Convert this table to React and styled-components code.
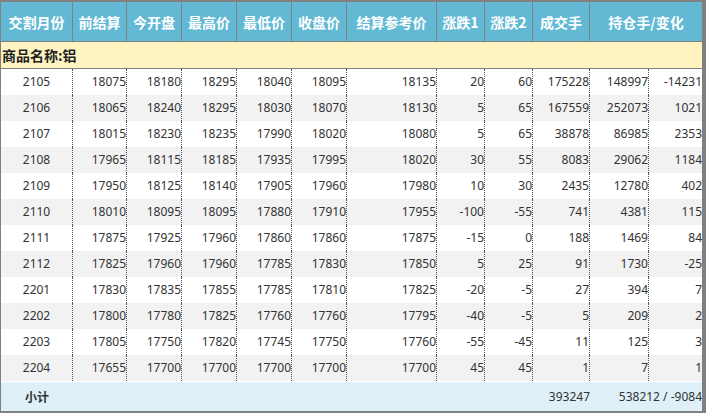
import React from "react";
import styled, { createGlobalStyle } from "styled-components";

const GlobalStyle = createGlobalStyle`
  html, body {
    margin: 0;
    padding: 0;
    background: #808080;
  }
`;

const Frame = styled.div`
  padding: 2px 4px 2px 1px;
  width: 701px;
`;

const Table = styled.table`
  width: 701px;
  table-layout: fixed;
  border-collapse: separate;
  border-spacing: 0;
  font-family: "Noto Sans", "Noto Sans CJK SC", sans-serif;
  font-size: 12px;
  color: #333;
`;

const HeadCell = styled.th`
  box-sizing: border-box;
  height: 40px;
  padding: 0;
  background: #62b9d4;
  color: #fff;
  font-family: "Noto Sans CJK SC", sans-serif;
  font-size: 14px;
  font-weight: bold;
  text-align: center;
  border-bottom: 1px solid #808080;
  border-right: ${(p) => (p.$last ? "none" : "1px solid #808080")};
`;

const ProductCell = styled.td`
  box-sizing: border-box;
  height: 27px;
  padding: 0 0 0 1px;
  background: #fff4c1;
  color: #222;
  font-family: "Noto Sans CJK SC", sans-serif;
  font-size: 14px;
  font-weight: bold;
  text-align: left;
  border-bottom: 1px solid #808080;
`;

const Row = styled.tr`
  background: ${(p) => (p.$odd ? "#f2f2f2" : "#ffffff")};
`;

const Cell = styled.td`
  box-sizing: border-box;
  height: 26px;
  padding: 0;
  line-height: 26px;
  text-align: ${(p) => (p.$center ? "center" : "right")};
  border-right: ${(p) => (p.$last ? "none" : "1px dotted #555")};
  white-space: nowrap;
`;

const FootCell = styled.td`
  box-sizing: border-box;
  height: 30px;
  padding: 0;
  background: #dff0f8;
  border-top: 1px solid #fff;
  text-align: ${(p) => (p.$center ? "center" : "right")};
  font-weight: ${(p) => (p.$bold ? "bold" : "normal")};
  font-family: ${(p) =>
    p.$bold ? '"Noto Sans CJK SC", sans-serif' : '"Noto Sans", sans-serif'};
  white-space: nowrap;
`;

const widths = [72, 54, 55, 55, 55, 55, 90, 48, 48, 57, 59, 53];

const headers = [
  "交割月份",
  "前结算",
  "今开盘",
  "最高价",
  "最低价",
  "收盘价",
  "结算参考价",
  "涨跌1",
  "涨跌2",
  "成交手",
];

const rows = [
  ["2105", "18075", "18180", "18295", "18040", "18095", "18135", "20", "60", "175228", "148997", "-14231"],
  ["2106", "18065", "18240", "18295", "18030", "18070", "18130", "5", "65", "167559", "252073", "1021"],
  ["2107", "18015", "18230", "18235", "17990", "18020", "18080", "5", "65", "38878", "86985", "2353"],
  ["2108", "17965", "18115", "18185", "17935", "17995", "18020", "30", "55", "8083", "29062", "1184"],
  ["2109", "17950", "18125", "18140", "17905", "17960", "17980", "10", "30", "2435", "12780", "402"],
  ["2110", "18010", "18095", "18095", "17880", "17910", "17955", "-100", "-55", "741", "4381", "115"],
  ["2111", "17875", "17925", "17960", "17860", "17860", "17875", "-15", "0", "188", "1469", "84"],
  ["2112", "17825", "17960", "17960", "17785", "17830", "17850", "5", "25", "91", "1730", "-25"],
  ["2201", "17830", "17835", "17855", "17785", "17810", "17825", "-20", "-5", "27", "394", "7"],
  ["2202", "17800", "17780", "17825", "17760", "17760", "17795", "-40", "-5", "5", "209", "2"],
  ["2203", "17805", "17750", "17820", "17745", "17750", "17760", "-55", "-45", "11", "125", "3"],
  ["2204", "17655", "17700", "17700", "17700", "17700", "17700", "45", "45", "1", "7", "1"],
];

export default function App() {
  return (
    <>
      <GlobalStyle />
      <Frame>
        <Table>
          <colgroup>
            {widths.map((w, i) => (
              <col key={i} style={{ width: w }} />
            ))}
          </colgroup>
          <thead>
            <tr>
              {headers.map((h) => (
                <HeadCell key={h}>{h}</HeadCell>
              ))}
              <HeadCell colSpan={2} $last>
                持仓手/变化
              </HeadCell>
            </tr>
          </thead>
          <tbody>
            <tr>
              <ProductCell colSpan={12}>商品名称:铝</ProductCell>
            </tr>
            {rows.map((r, i) => (
              <Row key={r[0]} $odd={i % 2 === 1}>
                {r.map((v, j) => (
                  <Cell key={j} $center={j === 0} $last={j === r.length - 1}>
                    {v}
                  </Cell>
                ))}
              </Row>
            ))}
            <tr>
              <FootCell $center $bold>
                小计
              </FootCell>
              <FootCell colSpan={8} />
              <FootCell>393247</FootCell>
              <FootCell colSpan={2}>538212 / -9084</FootCell>
            </tr>
          </tbody>
        </Table>
      </Frame>
    </>
  );
}
